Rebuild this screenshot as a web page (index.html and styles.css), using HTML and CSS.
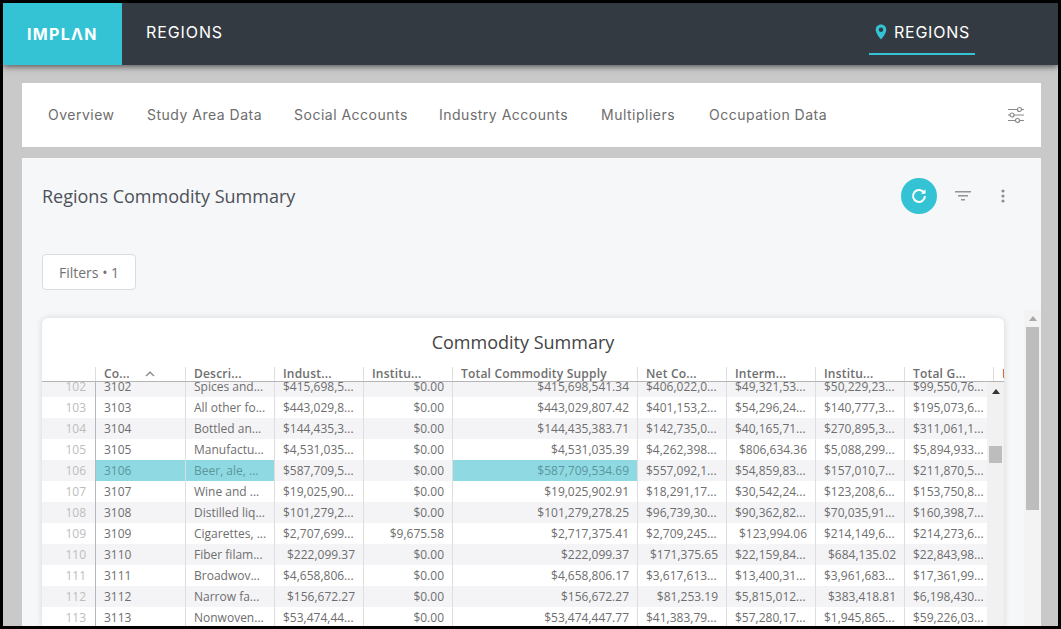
FILE: index.html
```html
<!DOCTYPE html>
<html lang="en">
<head>
<meta charset="utf-8">
<title>Regions Commodity Summary</title>
<link rel="stylesheet" href="styles.css">
</head>
<body>
<div class="frame">
  <header class="topbar">
    <div class="logo">IMPLΛN</div>
    <div class="app-title">REGIONS</div>
    <div class="tab">
      <svg class="pin" viewBox="0 0 12 16" width="12" height="16"><path fill-rule="evenodd" d="M6 0.5C2.9 0.5 0.7 2.8 0.7 5.7 0.7 8.9 4 13 6 15.5 8 13 11.3 8.9 11.3 5.7 11.3 2.8 9.1 0.5 6 0.5ZM6 3.6A2.2 2.2 0 1 1 6 8 2.2 2.2 0 0 1 6 3.6Z"/></svg>
      <span>REGIONS</span>
    </div>
  </header>
  <main class="content">
    <nav class="navcard">
      <a>Overview</a><a>Study Area Data</a><a>Social Accounts</a><a>Industry Accounts</a><a>Multipliers</a><a>Occupation Data</a>
      <svg class="sliders" viewBox="0 0 18 18" width="18" height="18"><g fill="none" stroke="#8a8a8a" stroke-width="1.2"><path d="M1 3.5H10.5M14.5 3.5H17M1 9H3M7 9H17M1 14.5H8.500M12.500 14.500H17"/><circle cx="12.500" cy="3.500" r="2"/><circle cx="5" cy="9" r="2"/><circle cx="10.500" cy="14.500" r="2"/></g></svg>
    </nav>
    <section class="panel">
      <div class="panel-head">
        <h1>Regions Commodity Summary</h1>
        <div class="actions">
          <button class="refresh"><svg viewBox="0 0 16 16" width="18" height="18"><path fill="none" stroke="#fff" stroke-width="1.800" d="M12.600 5.300A5.300 5.300 0 1 0 13.300 8"/><path fill="#fff" d="M9.700 5.900L13.800 6.100 13.800 1.900Z"/></svg></button>
          <svg class="filter" viewBox="0 0 16 10" width="16" height="10"><path fill="#949494" d="M0 0H16V1.500H0ZM3 4H13V5.500H3ZM6 8H10V9.500H6Z"/></svg>
          <svg class="dots" viewBox="0 0 4 14" width="4" height="14"><g fill="#8f8f8f"><circle cx="2" cy="2" r="1.600"/><circle cx="2" cy="7" r="1.600"/><circle cx="2" cy="12" r="1.600"/></g></svg>
        </div>
      </div>
      <button class="filters-btn">Filters • 1</button>
      <div class="scroller">
        <div class="card">
          <h2>Commodity Summary</h2>
          <div class="row head">
            <div class="c"></div>
            <div class="c h first">Co...<svg class="sort" viewBox="0 0 10 6" width="10" height="6"><path fill="none" stroke="#8a8a8a" stroke-width="1.400" d="M1 5L5 1.300 9 5"/></svg></div>
            <div class="c h">Descri...</div>
            <div class="c h">Indust...</div>
            <div class="c h">Institu...</div>
            <div class="c h">Total Commodity Supply</div>
            <div class="c h">Net Co...</div>
            <div class="c h">Interm...</div>
            <div class="c h">Institu...</div>
            <div class="c h">Total G...</div>
            <div class="c h peek">I</div>
          </div>
          <div class="grid-body">
            <div class="rows">
              <div class="row alt"><div class="c i">102</div><div class="c first">3102</div><div class="c">Spices and...</div><div class="c">$415,698,5...</div><div class="c n">$0.00</div><div class="c n">$415,698,541.34</div><div class="c">$406,022,0...</div><div class="c">$49,321,53...</div><div class="c">$50,229,23...</div><div class="c">$99,550,76...</div></div>
              <div class="row"><div class="c i">103</div><div class="c first">3103</div><div class="c">All other fo...</div><div class="c">$443,029,8...</div><div class="c n">$0.00</div><div class="c n">$443,029,807.42</div><div class="c">$401,153,2...</div><div class="c">$54,296,24...</div><div class="c">$140,777,3...</div><div class="c">$195,073,6...</div></div>
              <div class="row alt"><div class="c i">104</div><div class="c first">3104</div><div class="c">Bottled an...</div><div class="c">$144,435,3...</div><div class="c n">$0.00</div><div class="c n">$144,435,383.71</div><div class="c">$142,735,0...</div><div class="c">$40,165,71...</div><div class="c">$270,895,3...</div><div class="c">$311,061,1...</div></div>
              <div class="row"><div class="c i">105</div><div class="c first">3105</div><div class="c">Manufactu...</div><div class="c">$4,531,035...</div><div class="c n">$0.00</div><div class="c n">$4,531,035.39</div><div class="c">$4,262,398...</div><div class="c n">$806,634.36</div><div class="c">$5,088,299...</div><div class="c">$5,894,933...</div></div>
              <div class="row alt"><div class="c i">106</div><div class="c first sel">3106</div><div class="c sel">Beer, ale, ...</div><div class="c">$587,709,5...</div><div class="c n">$0.00</div><div class="c n sel">$587,709,534.69</div><div class="c">$557,092,1...</div><div class="c">$54,859,83...</div><div class="c">$157,010,7...</div><div class="c">$211,870,5...</div></div>
              <div class="row"><div class="c i">107</div><div class="c first">3107</div><div class="c">Wine and ...</div><div class="c">$19,025,90...</div><div class="c n">$0.00</div><div class="c n">$19,025,902.91</div><div class="c">$18,291,17...</div><div class="c">$30,542,24...</div><div class="c">$123,208,6...</div><div class="c">$153,750,8...</div></div>
              <div class="row alt"><div class="c i">108</div><div class="c first">3108</div><div class="c">Distilled liq...</div><div class="c">$101,279,2...</div><div class="c n">$0.00</div><div class="c n">$101,279,278.25</div><div class="c">$96,739,30...</div><div class="c">$90,362,82...</div><div class="c">$70,035,91...</div><div class="c">$160,398,7...</div></div>
              <div class="row"><div class="c i">109</div><div class="c first">3109</div><div class="c">Cigarettes, ...</div><div class="c">$2,707,699...</div><div class="c n">$9,675.58</div><div class="c n">$2,717,375.41</div><div class="c">$2,709,245...</div><div class="c n">$123,994.06</div><div class="c">$214,149,6...</div><div class="c">$214,273,6...</div></div>
              <div class="row alt"><div class="c i">110</div><div class="c first">3110</div><div class="c">Fiber filam...</div><div class="c n">$222,099.37</div><div class="c n">$0.00</div><div class="c n">$222,099.37</div><div class="c n">$171,375.65</div><div class="c">$22,159,84...</div><div class="c n">$684,135.02</div><div class="c">$22,843,98...</div></div>
              <div class="row"><div class="c i">111</div><div class="c first">3111</div><div class="c">Broadwov...</div><div class="c">$4,658,806...</div><div class="c n">$0.00</div><div class="c n">$4,658,806.17</div><div class="c">$3,617,613...</div><div class="c">$13,400,31...</div><div class="c">$3,961,683...</div><div class="c">$17,361,99...</div></div>
              <div class="row alt"><div class="c i">112</div><div class="c first">3112</div><div class="c">Narrow fa...</div><div class="c n">$156,672.27</div><div class="c n">$0.00</div><div class="c n">$156,672.27</div><div class="c n">$81,253.19</div><div class="c">$5,815,012...</div><div class="c n">$383,418.81</div><div class="c">$6,198,430...</div></div>
              <div class="row"><div class="c i">113</div><div class="c first">3113</div><div class="c">Nonwoven...</div><div class="c">$53,474,44...</div><div class="c n">$0.00</div><div class="c n">$53,474,447.77</div><div class="c">$41,383,79...</div><div class="c">$57,280,17...</div><div class="c">$1,945,865...</div><div class="c">$59,226,03...</div></div>
            </div>
            <div class="vbar inner"><span class="arrow"></span><span class="thumb"></span></div>
          </div>
        </div>
        <div class="vbar outer"><span class="arrow"></span><span class="thumb"></span></div>
      </div>
    </section>
  </main>
</div>
</body>
</html>
```
FILE: styles.css
```css
* { box-sizing: border-box; }
html, body { margin: 0; height: 100%; overflow: hidden; }
body { background: #000; font-family: "Open Sans", "Liberation Sans", sans-serif; }
.frame { height: 629px; width: 1061px; border: 3px solid #000; background: #c9c9c9; display: flex; flex-direction: column; overflow: hidden; }
.topbar { height: 62px; flex: none; background: #343a42; display: flex; align-items: center; color: #fff; box-shadow: 0 2px 6px rgba(0,0,0,.55); position: relative; z-index: 1; font-family: Inter, "Noto Sans", sans-serif; }
.logo { width: 119px; height: 100%; background: #34c3d4; display: flex; align-items: center; padding-left: 24px; font-weight: 700; font-size: 16px; letter-spacing: 1.3px; }
.app-title { margin-left: 24px; font-size: 16px; letter-spacing: .9px; flex: 1; margin-top: -4px; }
.tab { width: 106px; height: 35px; margin: 0 83px 10px 0; align-self: flex-end; border-bottom: 2px solid #34c3d4; display: flex; align-items: flex-start; gap: 7px; padding-left: 6px; font-size: 16px; letter-spacing: .75px; }
.tab span { line-height: 22px; margin-top: 1px; }
.pin { fill: #34c3d4; margin-top: 4px; }
.content { flex: 1; min-height: 0; padding: 18px 17px 0 19px; display: flex; flex-direction: column; gap: 11px; }
.navcard { height: 64px; flex: none; background: #fff; display: grid; grid-template-columns: 67px 115px 113px 130px 76px 121px 1fr; align-items: center; gap: 32px; padding: 0 16px 2px 26px; font-family: Inter, "Noto Sans", sans-serif; font-size: 14px; color: #6d6d6d; letter-spacing: .5px; white-space: nowrap; }
.sliders { justify-self: end; margin-top: 2px; }
.panel { flex: 1; min-height: 0; background: #f6f7f9; padding-left: 20px; display: flex; flex-direction: column; align-items: flex-start; }
.panel-head { align-self: stretch; height: 76px; flex: none; display: flex; align-items: center; padding-right: 36px; }
.panel-head h1 { margin: 0; font-size: 18px; font-weight: 400; color: #4c5158; flex: 1; }
.actions { display: flex; align-items: center; }
.refresh { width: 36px; height: 36px; border-radius: 50%; border: 0; padding: 0; background: #34c3d4; display: flex; align-items: center; justify-content: center; margin-right: 18px; }
.filter { margin-right: 30px; }
.filters-btn { margin-top: 20px; width: 94px; height: 36px; background: #fff; border: 1px solid #dcdcdc; border-radius: 4px; font: 400 14px "Open Sans", sans-serif; color: #727272; padding: 0; flex: none; }
.scroller { margin-top: 20px; flex: 1; min-height: 0; align-self: stretch; display: flex; justify-content: space-between; }
.card { width: 962px; margin-top: 8px; background: #fff; border-radius: 6px 6px 0 0; box-shadow: 0 0 6px rgba(0,0,0,.14); overflow: hidden; display: flex; flex-direction: column; }
.card h2 { margin: 0; height: 44px; flex: none; font-size: 18px; font-weight: 400; color: #444; text-align: center; line-height: 48px; }
.row { display: grid; grid-template-columns: 53px 90px 89px 89px 89px 185px 89px 89px 89px 89px 89px; height: 21px; font-size: 12px; line-height: 21px; color: #6e6e6e; background: #fff; }
.row.alt { background: #f4f4f6; }
.row.head { height: 20px; flex: none; border-bottom: 1px solid #b4b4b4; background: #fff; align-items: end; position: relative; z-index: 1; }
.c { padding: 0 8px; white-space: nowrap; overflow: hidden; border-left: 1px solid #dedede; }
.c:first-child { border-left: 0; }
.c.h { height: 14px; line-height: 14px; font-weight: 600; letter-spacing: .2px; position: relative; overflow: visible; color: #6e6e6e; }
.c.peek { color: #a8604c; }
.sort { position: absolute; left: 49px; top: 4px; }
.i { text-align: right; color: #bdbdbd; padding-right: 9px; }
.c.first { border-left-color: #b2b8be; }
.c.h.first { border-left-color: #dedede; }
.n { text-align: right; }
.sel { background: #8fdae2; color: #5c959d; }
.grid-body { flex: 1; min-height: 0; display: flex; overflow: hidden; }
.rows { width: 945px; flex: none; overflow: hidden; margin-top: -6px; }
.vbar { flex: none; width: 17px; background: #f1f1f1; position: relative; display: flex; flex-direction: column; align-items: center; }
.arrow { width: 0; height: 0; border-left: 4px solid transparent; border-right: 4px solid transparent; margin-top: 7px; }
.thumb { width: 13px; background: #bdbdbd; display: block; }
.vbar.inner .arrow { border-bottom: 5px solid #333; }
.vbar.inner .thumb { height: 17px; margin-top: 52px; }
.vbar.outer { background: #f3f3f4; }
.vbar.outer .arrow { border-bottom: 5px solid #a8a8a8; margin-top: 6px; }
.vbar.outer .thumb { height: 183px; margin-top: 6px; }
```
